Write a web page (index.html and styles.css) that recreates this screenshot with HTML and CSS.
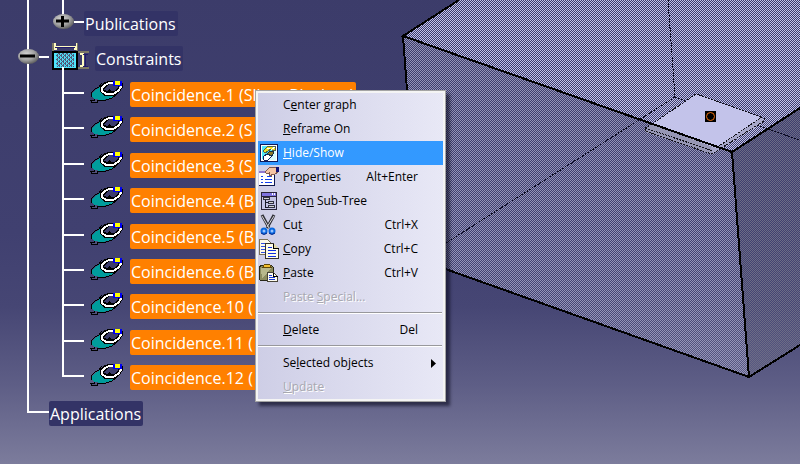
FILE: index.html
```html
<!DOCTYPE html>
<html lang="en">
<head>
<meta charset="utf-8">
<title>Assembly constraints</title>
<link rel="stylesheet" href="styles.css">
</head>
<body>
<svg class="defs" width="0" height="0" aria-hidden="true">
  <defs>
    <radialGradient id="ball" cx="0.4" cy="0.35" r="0.65">
      <stop offset="0" stop-color="#d4d4d4"/><stop offset="0.6" stop-color="#a2a2a2"/><stop offset="1" stop-color="#626262"/>
    </radialGradient>
    <symbol id="coincidence" viewBox="0 2 33 25" overflow="visible">
      <g shape-rendering="crispEdges">
        <path d="M1 20h4v-2h5v2h-2v2h-6v-2" fill="#50507c" stroke="#000"/>
        <path d="M3 17v-4l2-2 3-2 4-3h2v4l4 4h9v2l-7 3-8 1-6-1z" fill="#009c9c"/>
        <path d="M2 17v-4l2-2 2-2 4-2 3-4M9 21l8-1 6-2 4-3" fill="none" stroke="#000"/>
        <path d="M27 1h-8l-5 2-3 4v5l5 4h10l5-4 3-5V3z" fill="#000"/>
        <path d="M26 4h-5l-5 4-1 2 3 1 5-5 6-1 1 2-4 4 2-1 3-4V4z" fill="#3d3d6b"/>
        <path d="M18 7l4-2h5l2 2-4 4h-3z" fill="#3d3d6b"/>
        <path d="M27 3h-7l-4 2-3 3v3l4 3h7l5-3 3-4V5" fill="none" stroke="#fff" stroke-width="2"/>
        <path d="M24 1h9v5h-9z" fill="#0000f4"/><path d="M26 1h5v4h-5z" fill="#ff0"/>
      </g>
    </symbol>
    <pattern id="weave" width="4" height="4" patternUnits="userSpaceOnUse">
      <path d="M0 0h4v4H0z" fill="#50d8f0"/><path d="M0 0h2v1H0zM2 2h2v1H2zM1 1h1v1H1zM3 1h1v1H3zM1 3h1v1H1zM3 3h1v1H3z" fill="#505878"/>
    </pattern>
  </defs>
</svg>

<main class="viewport">
  <svg class="scene" viewBox="0 0 800 464" preserveAspectRatio="xMaxYMin slice" role="img" aria-label="3D part">
    <defs>
      <pattern id="top" width="2" height="2" patternUnits="userSpaceOnUse"><path d="M0 0h1v1H0zM1 1h1v1H1z" fill="#c2c2ea" shape-rendering="crispEdges"/></pattern>
      <pattern id="front" width="2" height="2" patternUnits="userSpaceOnUse"><path d="M0 0h1v1H0zM1 1h1v1H1z" fill="#9494b8" shape-rendering="crispEdges"/></pattern>
      <pattern id="side" width="2" height="2" patternUnits="userSpaceOnUse"><path d="M0 0h1v1H0zM1 1h1v1H1z" fill="#6c6c86" shape-rendering="crispEdges"/></pattern>
    </defs>
    <g shape-rendering="crispEdges">
      <path d="M403 36L459 0h341v108l-68 44z" fill="url(#top)"/>
      <path d="M403 36l329 116 17 225-329-117z" fill="url(#front)"/>
      <path d="M732 152l68-44v237l-51 32z" fill="url(#side)"/>
      <path d="M668 0l7 97M675 97L446 243M675 97l125 43" fill="none" stroke="#08081c" stroke-dasharray="2 1"/>
      <path d="M652 124l-7 4v4l67 22 6-6z" fill="#9696b4"/>
      <path d="M762 117l2 5-51 32-2-7z" fill="#a8a8ca"/>
      <path d="M696 94l66 23-46 31-64-24z" fill="#c3c3ea"/>
      <path d="M652 124l44-30 66 23-46 31M652 124l-7 4v3l67 23 52-33v-4M645 128l68 23" fill="none" stroke="#101018" stroke-dasharray="2 1"/>
      <path d="M459 0l-56 36 329 116 68-44M403 36l4 54 13 170 329 117 51-32M732 152l17 225" fill="none" stroke="#000" stroke-width="2"/>
      <path d="M705 111h11v11h-11z"/>
    </g>
    <circle cx="710.5" cy="116.5" r="4" fill="none" stroke="#f07010"/>
  </svg>

  <nav class="tree" aria-label="Specification tree">
    <ul class="root">
      <li class="node first">
        <div class="row publications">
          <button class="knob" aria-label="Expand Publications"><svg width="21" height="15"><ellipse cx="10.5" cy="7.5" rx="10.5" ry="7.5" fill="url(#ball)"/><path d="M3 7h13M9.500 2v11" stroke="#000" stroke-width="3"/></svg></button>
          <span class="stub short"></span><span class="label">Publications</span>
        </div>
      </li>
      <li class="node">
        <div class="row constraints">
          <button class="knob" aria-label="Collapse Constraints"><svg width="21" height="15"><ellipse cx="10.5" cy="7.5" rx="10.5" ry="7.5" fill="url(#ball)"/><path d="M2 7h15" stroke="#000" stroke-width="3"/></svg></button>
          <span class="stub short"></span>
          <svg class="sketch" width="37" height="27" shape-rendering="crispEdges" aria-hidden="true">
            <path d="M0 0h2v8H0zM24 0h2v8h-2zM26 8h11v2H26zM26 24h11v2H26z" fill="#7c7864"/>
            <path d="M2 0h2v3h20V0h1v7h-3V5H5v2H2zM28 10h4v14h-4v-2h2V12h-2z" fill="#fffcc0"/>
            <path d="M3 4h20M33 11v12M31 11h5M31 23h5" stroke="#20186c" fill="none"/>
            <path d="M0 8h26v19H0z"/><path d="M2 10h22v15H2z" fill="#50e4fc"/>
            <path d="M4 10h18v14H4z" fill="url(#weave)"/><path d="M10 24h2v3h-2z" fill="#fff"/>
          </svg>
          <span class="label">Constraints</span>
        </div>
        <ul class="children">
          <li class="leaf row"><span class="stub"></span><svg class="mark" width="33" height="25"><use href="#coincidence"/></svg><span class="label selected">Coincidence.1 (Sllent Blockett)</span></li>
          <li class="leaf row"><span class="stub"></span><svg class="mark" width="33" height="25"><use href="#coincidence"/></svg><span class="label selected">Coincidence.2 (S</span></li>
          <li class="leaf row"><span class="stub"></span><svg class="mark" width="33" height="25"><use href="#coincidence"/></svg><span class="label selected">Coincidence.3 (S</span></li>
          <li class="leaf row"><span class="stub"></span><svg class="mark" width="33" height="25"><use href="#coincidence"/></svg><span class="label selected">Coincidence.4 (B</span></li>
          <li class="leaf row"><span class="stub"></span><svg class="mark" width="33" height="25"><use href="#coincidence"/></svg><span class="label selected">Coincidence.5 (B</span></li>
          <li class="leaf row"><span class="stub"></span><svg class="mark" width="33" height="25"><use href="#coincidence"/></svg><span class="label selected">Coincidence.6 (B</span></li>
          <li class="leaf row"><span class="stub"></span><svg class="mark" width="33" height="25"><use href="#coincidence"/></svg><span class="label selected">Coincidence.10 (</span></li>
          <li class="leaf row"><span class="stub"></span><svg class="mark" width="33" height="25"><use href="#coincidence"/></svg><span class="label selected">Coincidence.11 (</span></li>
          <li class="leaf row"><span class="stub"></span><svg class="mark" width="33" height="25"><use href="#coincidence"/></svg><span class="label selected">Coincidence.12 (</span></li>
        </ul>
      </li>
      <li class="node last">
        <div class="row applications"><span class="stub"></span><span class="label">Applications</span></div>
      </li>
    </ul>
  </nav>

  <div class="menu" role="menu" aria-label="Context menu">
    <button class="item" role="menuitem"><span class="icon"></span><span>C<u>e</u>nter graph</span></button>
    <button class="item" role="menuitem"><span class="icon"></span><span><u>R</u>eframe On</span></button>
    <button class="item active" role="menuitem"><span class="icon"><svg width="22" height="22" shape-rendering="crispEdges">
      <path d="M2 2h18v18H2z" fill="#101858"/><path d="M3 3h16v16H3z" fill="#fff"/><path d="M4 4h14v14H4z" fill="#50e8f8"/>
      <path d="M4 17l5-5 7-4 2 1v9H4z" fill="#d8fcff"/>
      <path d="M5 9l4-4 8-1 1 4-3 1-2-2-6 4z" fill="#f0e020" stroke="#506048"/><path d="M9 7l3-1M13 8l4-3" stroke="#fff"/>
      <path d="M5 15l4-3 5 2-4 4H6z" fill="#fff" stroke="#102060"/><path d="M9 12l3-3 4 1-2 4z" fill="#8c7a28" stroke="#103048"/>
    </svg></span><span><u>H</u>ide/Show</span></button>
    <button class="item" role="menuitem"><span class="icon"><svg width="22" height="22" shape-rendering="crispEdges">
      <path d="M1 5h16v15H1z" fill="#101850"/><path d="M1 5h15v14H1z" fill="#fff"/><path d="M1 5h9v2H1z" fill="#9078d0"/>
      <path d="M3 10h2M3 13h2M3 16h2M7 13h7M7 16h7M9 10h4" stroke="#1040f0"/>
      <path d="M7 6l4-4 4-1 5 1v4l-4 3-3-1v2l-2-1V7L9 8z" fill="#f4c4a4" stroke="#80584c"/><path d="M18 1h3v5h-3z" fill="#101078"/>
    </svg></span><span>Pr<u>o</u>perties</span><span class="keys">Alt+Enter</span></button>
    <button class="item" role="menuitem"><span class="icon"><svg width="22" height="22" shape-rendering="crispEdges">
      <path d="M3 2h16v18H3z" fill="#282438"/><path d="M4 3h14v3H4z" fill="#8074e0"/><path d="M14 3h1v2h-1zM16 3h1v2h-1z" fill="#fff"/><path d="M4 7h14v12H4z" fill="#c4c4e4"/>
      <path d="M7 9v8h4M7 12h3" fill="none" stroke="#181828"/>
      <path d="M5 7h7v3H5zM10 11h6v3h-6zM10 15h7v3h-7z" fill="#303040"/><path d="M6 8h5v1H6zM11 12h4v1h-4zM11 16h5v1h-5z" fill="#d4d4d4"/>
    </svg></span><span>Ope<u>n</u> Sub-Tree</span></button>
    <button class="item" role="menuitem"><span class="icon"><svg width="22" height="22">
      <path d="M4 1l7 13M16 1L9 14" stroke="#303038" stroke-width="3"/><path d="M4 2l7 12M16 2L9 13" stroke="#d8d8dc"/>
      <circle cx="6" cy="17" r="2.5" fill="#98c4ff" stroke="#0868e0" stroke-width="2"/><circle cx="14" cy="17" r="2.500" fill="#98c4ff" stroke="#0868e0" stroke-width="2"/>
      <path d="M3 19q3 3 6 0M11 19q3 3 6 0" fill="none" stroke="#082888"/>
    </svg></span><span>Cu<u>t</u></span><span class="keys">Ctrl+X</span></button>
    <button class="item" role="menuitem"><span class="icon"><svg width="22" height="22" shape-rendering="crispEdges">
      <path d="M1.500 1.500h8l4 4v11h-12z" fill="#fffbe8" stroke="#787058"/><path d="M3 5h5M3 8h6M3 11h6M3 14h6" stroke="#3050e0"/>
      <path d="M7.500 5.500h8l5 5v10h-13z" fill="#fffde8" stroke="#38342c"/><path d="M15.500 5.500v5h5" fill="#e0d8a8" stroke="#000"/><path d="M10 9h4M10 12h8M10 15h8M10 18h8" stroke="#1030e0"/>
    </svg></span><span><u>C</u>opy</span><span class="keys">Ctrl+C</span></button>
    <button class="item" role="menuitem"><span class="icon"><svg width="22" height="22" shape-rendering="crispEdges">
      <path d="M1.500 4.500l2-1h10l2 2v12l-1 1h-12l-1-1z" fill="#8c8c60" stroke="#282818"/><path d="M3 6l11-1-10 12z" fill="#b8b88c"/>
      <path d="M4.500 5.500l2-3h5l2 3z" fill="#f4c030" stroke="#604808"/>
      <path d="M9.500 10.500h6l4 4v5h-10z" fill="#fffdf0" stroke="#484438"/><path d="M15.500 10.500v4h4" fill="none" stroke="#000"/><path d="M11 13h3M11 15h6M11 17h6" stroke="#1838d8"/>
    </svg></span><span><u>P</u>aste</span><span class="keys">Ctrl+V</span></button>
    <button class="item" role="menuitem" disabled><span class="icon"></span><span>Paste <u>S</u>pecial...</span></button>
    <hr class="rule">
    <button class="item" role="menuitem"><span class="icon"></span><span><u>D</u>elete</span><span class="keys">Del</span></button>
    <hr class="rule">
    <button class="item parent" role="menuitem" aria-haspopup="menu"><span class="icon"></span><span>Se<u>l</u>ected objects</span><svg class="arrow" width="5" height="9" aria-hidden="true"><path d="M0 0l5 4.500-5 4.500z"/></svg></button>
    <button class="item" role="menuitem" disabled><span class="icon"></span><span><u>U</u>pdate</span></button>
  </div>
</main>
</body>
</html>
```
FILE: styles.css
```css
* { box-sizing: border-box; }
body { margin: 0; font-family: "Open Sans", "Noto Sans", sans-serif; }
ul { list-style: none; margin: 0; padding: 0; }
button { border: 0; padding: 0; background: none; font: inherit; color: inherit; }
svg { display: block; flex: none; }
.defs { position: absolute; }

.viewport {
  position: relative;
  min-height: 100vh;
  overflow: hidden;
  background: linear-gradient(#3c3c6a 0%, #404070 50%, #464674 66%, #5e5e86 83%, #7c7c9c 100%);
}
.scene { position: absolute; inset: 0; width: 100%; height: 100%; }

/* Specification tree */
.tree { position: relative; color: #fff; font-size: 16px; line-height: 23px; }
.node { position: relative; padding-top: 10px; }
.node.first, .node.last { padding-top: 11px; }
.node::before {
  content: "";
  position: absolute;
  left: 27px;
  top: 0;
  bottom: 0;
  width: 2px;
  background: #fff;
}
.node.last::before { bottom: 13px; }
.row { position: relative; display: flex; align-items: center; }
.publications { padding-left: 53px; }
.constraints { padding-left: 18px; }
.applications { padding-left: 27px; }
.publications::before {
  content: "";
  position: absolute;
  left: 62px;
  top: -11px;
  height: 20px;
  width: 2px;
  background: #fff;
}
.knob { position: relative; margin-bottom: 4px; }
.stub { width: 22px; height: 2px; margin-bottom: 3px; background: #fff; }
.stub.short { width: 10px; }
.sketch { margin: -4px 6px 0 3px; }
.label {
  padding: 2px 2px 0 1px;
  border-radius: 2px;
  background: #333366;
  white-space: nowrap;
}
.label.selected { min-width: 130px; background: #ff8000; }
.children {
  position: relative;
  display: flex;
  flex-direction: column;
  justify-content: space-between;
  min-height: 319px;
  padding: 11px 0 0 62px;
}
.children::before {
  content: "";
  position: absolute;
  left: 62px;
  top: -4px;
  bottom: 13px;
  width: 2px;
  background: #fff;
}
.mark { margin: 0 8px 0 5px; overflow: visible; }

/* Context menu */
.menu {
  position: absolute;
  left: 255px;
  top: 90px;
  width: 191px;
  padding: 2px;
  border: 1px solid #a4a4a4;
  background: linear-gradient(90deg, #cecee6, #e8e8f6) content-box, #f4f4f4;
  box-shadow: 4px 4px 3px rgba(10, 10, 30, 0.6);
  font-size: 12px;
  line-height: 24px;
  color: #000;
}
.item {
  display: flex;
  align-items: center;
  width: 100%;
  height: 24px;
  padding-right: 25px;
  text-align: left;
  white-space: nowrap;
}
.icon { width: 25px; flex: none; }
.keys { margin-left: auto; }
.item.active { background: #3399ff; color: #fff; }
.item:disabled { color: #a8a8b0; text-shadow: 1px 1px #fff; }
.item.parent { padding-right: 7px; }
.arrow { margin-left: auto; }
.rule {
  height: 2px;
  margin: 3px 1px 4px 0;
  border: 0;
  border-top: 1px solid #98989c;
  border-bottom: 1px solid #fff;
}
```
